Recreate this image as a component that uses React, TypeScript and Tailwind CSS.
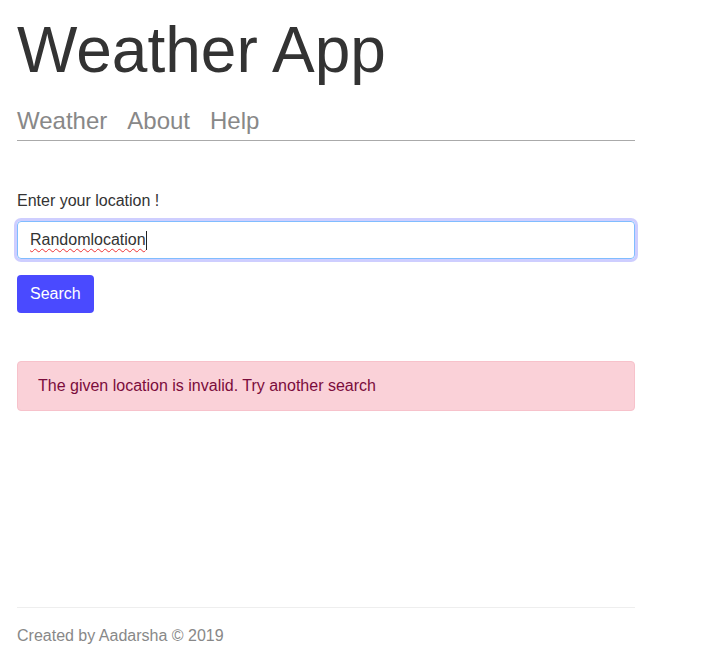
import React from "react";

const App: React.FC = () => {
  return (
    <div className="min-h-screen bg-white font-['Liberation_Sans',Arial,sans-serif] text-[#333]">
      <div className="w-[618px] ml-[17px] pt-[18px] pb-[10px]">
        <header>
          <h1 className="text-[64px] leading-[64px] text-[#333]">Weather App</h1>
          <nav className="mt-[27px] pb-[7px] border-b border-[#aaa] flex gap-5 text-[24px] leading-[24px] text-[#888]">
            <a>Weather</a>
            <a>About</a>
            <a>Help</a>
          </nav>
        </header>

        <main className="mt-[48px]">
          <label className="block text-[16px] leading-[24px] text-[#333] mb-[8px]">Enter your location !</label>
          <div className="h-[38px] flex items-center px-[12px] border border-[#80bdff] rounded-[4px] shadow-[0_0_0_3px_rgba(190,190,255,0.75)] text-[16px] text-[#333]">
            <span className="underline decoration-wavy decoration-[#e33] decoration-1 underline-offset-[3px]">Randomlocation</span>
            <span className="w-px h-[19px] bg-[#222]"></span>
          </div>
          <button className="mt-[16px] h-[38px] px-[13px] rounded-[4px] bg-[#4a4aff] text-white text-[16px] leading-[24px]">
            Search
          </button>

          <div className="mt-[48px] h-[50px] flex items-center px-[20px] border border-[#f7c2cb] rounded-[4px] bg-[#fad1d8] text-[#7b0c3c] text-[16px] leading-[24px]">
            The given location is invalid. Try another search
          </div>
        </main>

        <footer className="mt-[196px] border-t border-[#eee] pt-[16px] text-[16px] leading-[24px] text-[#888]">
          Created by Aadarsha © 2019
        </footer>
      </div>
    </div>
  );
};

export default App;
